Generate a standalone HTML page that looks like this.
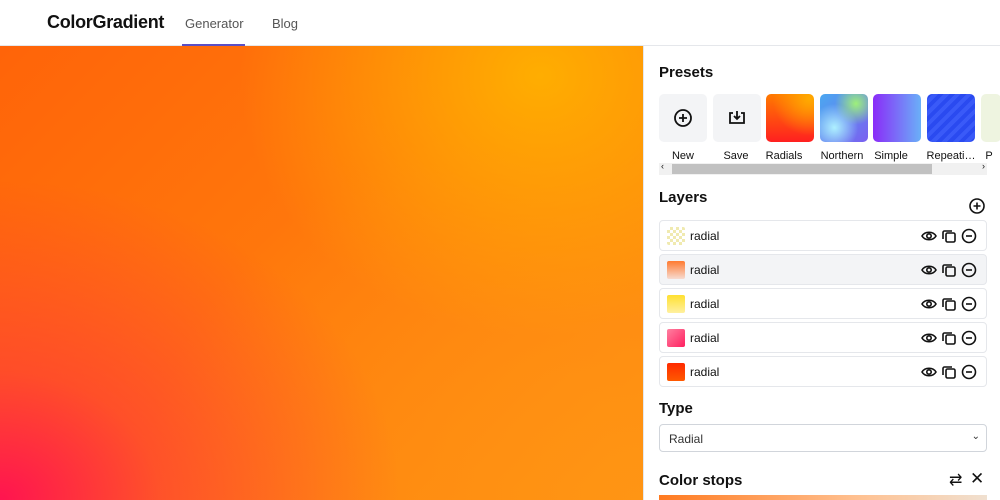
<!DOCTYPE html>
<html><head><meta charset="utf-8"><style>
*{box-sizing:border-box;margin:0;padding:0}
body{width:1000px;height:500px;overflow:hidden;font-family:"Liberation Sans",sans-serif;background:#fff;position:relative;color:#111}
.hdr{position:absolute;left:0;top:0;width:1000px;height:46px;background:#fff;border-bottom:1px solid #e5e7eb}
.logo{position:absolute;left:47px;top:12px;font-size:18px;font-weight:bold;color:#111;letter-spacing:-0.3px}
.nav{position:absolute;top:16px;font-size:13px;color:#555}
.ul{position:absolute;left:182px;top:44px;width:63px;height:2px;background:#5b4fc4}
.canvas{position:absolute;left:0;top:46px;width:643px;height:454px;
background:
radial-gradient(ellipse 300px 260px at 540px 30px,rgba(255,176,0,0.95),rgba(255,176,0,0) 100%),
radial-gradient(ellipse 400px 320px at 0px 454px,rgba(255,20,80,1),rgba(255,40,70,0.5) 40%,rgba(255,60,60,0) 100%),
radial-gradient(ellipse 500px 400px at 643px 454px,rgba(255,150,20,0.9),rgba(255,150,20,0) 100%),
linear-gradient(135deg,#ff6409 0%,#ff7a0c 50%,#ff8c10 100%)}
.side{position:absolute;left:643px;top:46px;width:357px;height:454px;border-left:1px solid #e5e7eb;background:#fff}
h3{position:absolute;left:15px;font-size:15px;font-weight:bold;color:#111}
.pre{position:absolute;top:48px;width:48px;height:48px;border-radius:5px}
.pl{position:absolute;top:104px;font-size:11px;color:#111;text-align:center;width:54px}
.sb{position:absolute;left:15px;top:117px;width:328px;height:12px;background:#f1f1f1}
.th{position:absolute;left:13px;top:1px;width:260px;height:10px;background:#c1c1c1}
.row{position:absolute;left:15px;width:328px;height:31px;border:1px solid #e5e7eb;border-radius:4px;background:#fff}
.row.a{background:#f3f4f6}
.sw{position:absolute;left:7px;top:6px;width:18px;height:18px;border-radius:2px}
.rt{position:absolute;left:30px;top:8px;font-size:12px;color:#111}
.ic{position:absolute;top:7px}
.sel{position:absolute;left:15px;top:378px;width:328px;height:28px;border:1px solid #d1d5db;border-radius:4px;font-size:12px;color:#333;padding:7px 9px}
</style></head><body>
<div class="hdr">
<div class="logo">ColorGradient</div>
<div class="nav" style="left:185px">Generator</div>
<div class="nav" style="left:272px">Blog</div>
<div class="ul"></div>
</div>
<div class="canvas"></div>
<div class="side">
<h3 style="top:18px">Presets</h3>
<div class="pre" style="left:15px;background:#f3f4f6"><svg width="48" height="48"><circle cx="24" cy="24" r="8" fill="none" stroke="#111" stroke-width="1.8"/><path d="M24 20v8M20 24h8" stroke="#111" stroke-width="1.8"/></svg></div>
<div class="pre" style="left:69px;background:#f3f4f6"><svg width="48" height="48"><path d="M20 19h-3v10h14V19h-3M24 17v8M21 22l3 3 3-3" fill="none" stroke="#111" stroke-width="1.8"/></svg></div>
<div class="pre" style="left:122px;background:radial-gradient(circle at 90% 10%,#ffaa00,transparent 60%),linear-gradient(#ff7a00,#ff2020)"></div>
<div class="pre" style="left:176px;background:radial-gradient(circle at 75% 20%,#9ef07a,transparent 40%),radial-gradient(circle at 30% 70%,#aef0ff,transparent 50%),linear-gradient(135deg,#4aa8f0,#7a60f0)"></div>
<div class="pre" style="left:229px;background:linear-gradient(90deg,#8a2cf8,#6ab0f8)"></div>
<div class="pre" style="left:283px;background:repeating-linear-gradient(135deg,#2a4af0 0 4px,#3a5af8 4px 8px),#2a4af0"></div>
<div class="pre" style="left:337px;width:20px;background:#eef4e0"></div>
<div class="pl" style="left:12px">New</div>
<div class="pl" style="left:65px">Save</div>
<div class="pl" style="left:113px">Radials</div>
<div class="pl" style="left:171px">Northern</div>
<div class="pl" style="left:220px">Simple</div>
<div class="pl" style="left:280px">Repeati…</div>
<div class="pl" style="left:318px">P</div>
<div class="sb"><div class="th"></div><span style="position:absolute;left:2px;top:-2px;font-size:9px">‹</span><span style="position:absolute;right:2px;top:-2px;font-size:9px">›</span></div>
<h3 style="top:143px">Layers</h3>
<svg style="position:absolute;left:324px;top:151px" width="18" height="18"><circle cx="9" cy="9" r="7" fill="none" stroke="#111" stroke-width="1.6"/><path d="M9 5.5v7M5.5 9h7" stroke="#111" stroke-width="1.6"/></svg>
<div id="rows"></div>
<h3 style="top:354px">Type</h3>
<div class="sel">Radial<span style="position:absolute;right:6px;top:6px;font-size:10px">⌄</span></div>
<h3 style="top:426px">Color stops</h3>
<div style="position:absolute;left:305px;top:424px;font-size:16px">⇄</div>
<div style="position:absolute;left:326px;top:423px;font-size:17px">✕</div>
<div style="position:absolute;left:15px;top:449px;width:328px;height:5px;background:linear-gradient(90deg,#ff7a20,#ffc090 60%,#f0e0d0)"></div>
</div>
<script>
var sw=["repeating-conic-gradient(#f0eab0 0 25%,#fff 0 50%) 0 0/6px 6px","linear-gradient(#ff7a30,rgba(255,160,120,.3))","linear-gradient(#ffe030,#fff0a0)","linear-gradient(135deg,#ff80a0,#ff2060)","linear-gradient(#ff2a00,#ff5a00)"];
var h="";
for(var i=0;i<5;i++){h+='<div class="row'+(i==1?' a':'')+'" style="top:'+(174+i*34)+'px"><div class="sw" style="background:'+sw[i]+'"></div><div class="rt">radial</div>'+
'<svg class="ic" style="left:260px" width="18" height="16"><path d="M2 8c3-5 11-5 14 0c-3 5-11 5-14 0z" fill="none" stroke="#111" stroke-width="1.6"/><circle cx="9" cy="8" r="2.2" fill="none" stroke="#111" stroke-width="1.6"/></svg>'+
'<svg class="ic" style="left:281px" width="16" height="16"><rect x="5" y="5" width="9" height="9" rx="1.5" fill="none" stroke="#111" stroke-width="1.6"/><path d="M11 3H3.5A1.5 1.5 0 0 0 2 4.5V11" fill="none" stroke="#111" stroke-width="1.6"/></svg>'+
'<svg class="ic" style="left:301px" width="16" height="16"><circle cx="8" cy="8" r="6.5" fill="none" stroke="#111" stroke-width="1.6"/><path d="M5 8h6" stroke="#111" stroke-width="1.6"/></svg></div>';}
document.getElementById("rows").innerHTML=h;
</script>
</body></html>
